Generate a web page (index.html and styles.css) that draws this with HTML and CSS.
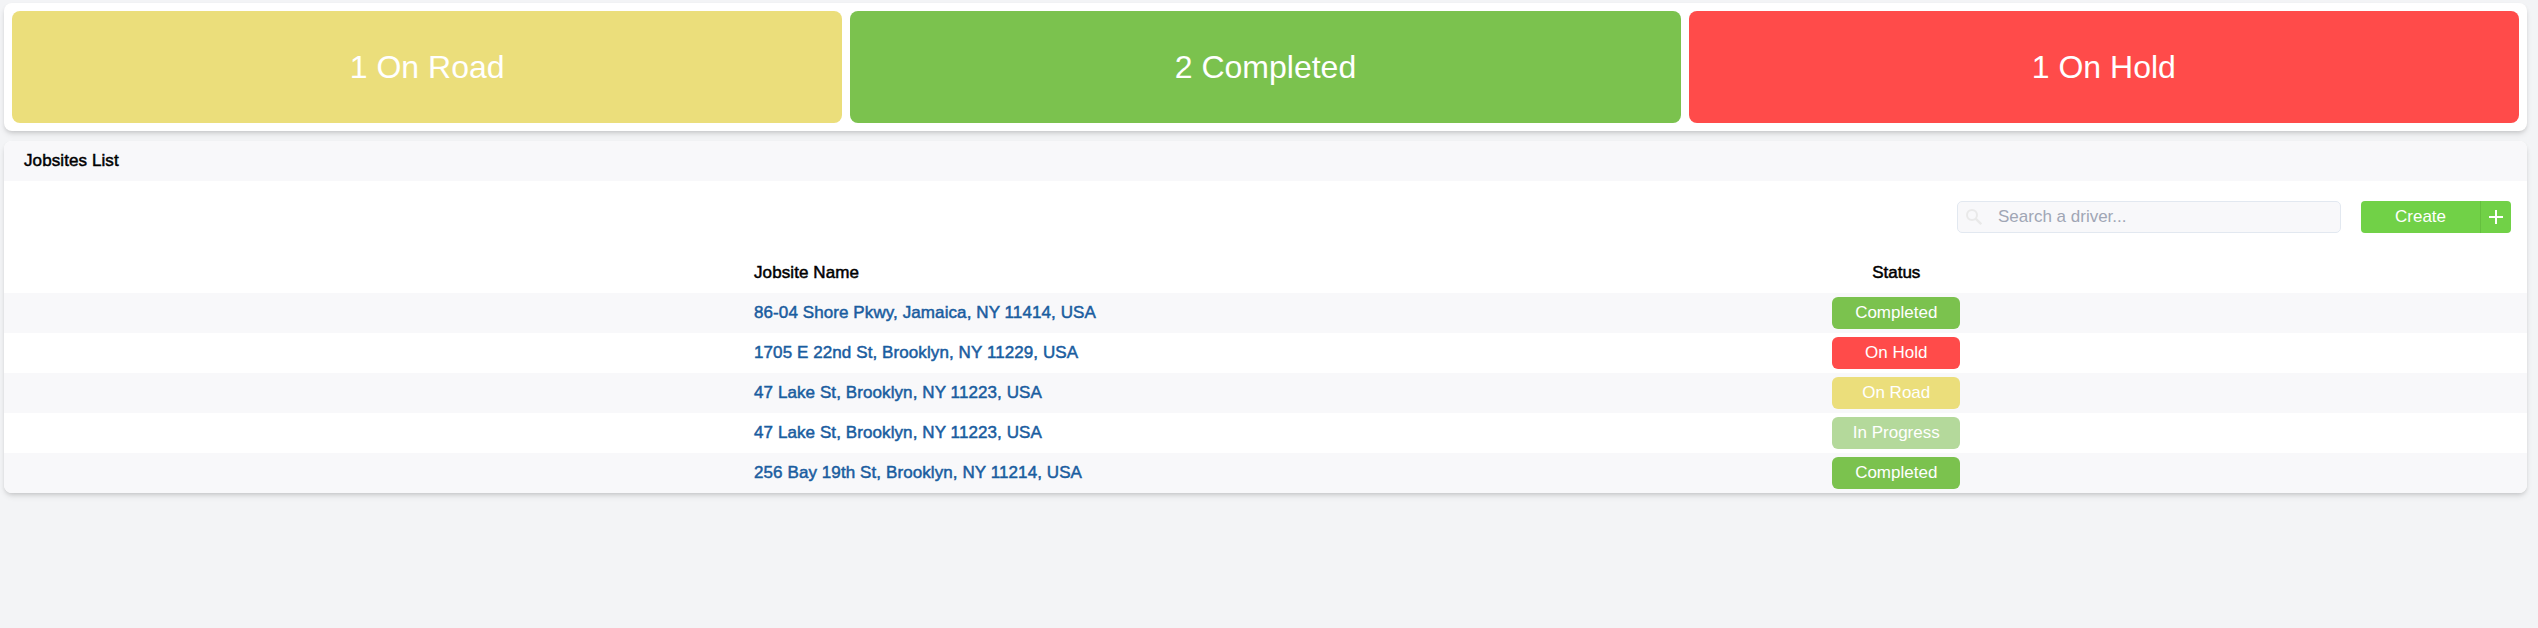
FILE: index.html
```html
<!DOCTYPE html>
<html lang="en">
<head>
<meta charset="utf-8">
<title>Jobsites</title>
<link rel="stylesheet" href="styles.css">
</head>
<body>
<main class="page">
  <section class="summary">
    <div class="tile road">1 On Road</div>
    <div class="tile completed">2 Completed</div>
    <div class="tile hold">1 On Hold</div>
  </section>
  <section class="panel">
    <header class="panel-title"><span>Jobsites List</span></header>
    <div class="toolbar">
      <label class="search">
        <svg class="search-icon" viewBox="0 0 16 16" width="16" height="16" fill="none" stroke="currentColor"><circle cx="6" cy="6" r="5" stroke-width="2"/><path d="M9.6 9.6L15.2 15.2" stroke-width="2.3"/></svg>
        <input type="text" placeholder="Search a driver...">
      </label>
      <button class="create">
        <span class="create-label">Create</span>
        <span class="create-plus"><svg viewBox="0 0 14 14" width="14" height="14" stroke="currentColor" stroke-width="2"><path d="M7 0V14M0 7H14"/></svg></span>
      </button>
    </div>
    <div class="row head"><span class="name">Jobsite Name</span><span class="status">Status</span></div>
    <div class="row"><a class="name">86-04 Shore Pkwy, Jamaica, NY 11414, USA</a><span class="status"><span class="badge completed">Completed</span></span></div>
    <div class="row"><a class="name">1705 E 22nd St, Brooklyn, NY 11229, USA</a><span class="status"><span class="badge hold">On Hold</span></span></div>
    <div class="row"><a class="name">47 Lake St, Brooklyn, NY 11223, USA</a><span class="status"><span class="badge road">On Road</span></span></div>
    <div class="row"><a class="name">47 Lake St, Brooklyn, NY 11223, USA</a><span class="status"><span class="badge progress">In Progress</span></span></div>
    <div class="row"><a class="name">256 Bay 19th St, Brooklyn, NY 11214, USA</a><span class="status"><span class="badge completed">Completed</span></span></div>
  </section>
</main>
</body>
</html>
```
FILE: styles.css
```css
* { box-sizing: border-box; }
body {
  margin: 0;
  min-height: 100vh;
  background: #f3f4f6;
  color: #000;
  font: 17px/24px "Liberation Sans", Arial, sans-serif;
}
.page {
  display: flex;
  flex-direction: column;
  gap: 10px;
  padding: 3px 11px 0 4px;
}
.summary, .panel {
  background: #fff;
  border-radius: 8px;
  box-shadow: 0 4px 6px -1px rgba(0, 0, 0, .1), 0 2px 4px -1px rgba(0, 0, 0, .12);
}
.summary {
  display: grid;
  grid-template-columns: repeat(3, 1fr);
  gap: 8px;
  padding: 8px;
}
.tile {
  display: flex;
  align-items: center;
  justify-content: center;
  height: 112px;
  border-radius: 8px;
  color: #fff;
  font-size: 32px;
}
.road { background: #ebde7b; }
.completed { background: #7bc24e; }
.hold { background: #ff4b4a; }
.progress { background: #b4d99b; }
.panel { overflow: hidden; }
.panel-title {
  display: flex;
  align-items: center;
  height: 40px;
  padding-left: 20px;
  background: #f8f8fa;
  letter-spacing: .09px;
  -webkit-text-stroke: .5px;
}
.toolbar {
  display: flex;
  justify-content: flex-end;
  gap: 20px;
  padding: 20px 16px;
}
.search {
  display: flex;
  align-items: center;
  gap: 16px;
  width: 384px;
  height: 32px;
  padding: 0 8px;
  background: #f8f8fa;
  border: 1px solid #e2e8f0;
  border-radius: 5px;
}
.search-icon { color: #e9e9e9; }
.search input {
  flex: 1;
  min-width: 0;
  padding: 0;
  border: 0;
  outline: 0;
  background: transparent;
  font: inherit;
}
.search input::placeholder { color: #a0a6b5; }
.create {
  display: flex;
  width: 150px;
  height: 32px;
  padding: 0;
  border: 0;
  border-radius: 4px;
  background: #71d147;
  color: #fff;
  font: inherit;
  line-height: 32px;
}
.create-label { width: 119px; }
.create-plus {
  display: flex;
  flex: 1;
  align-items: center;
  justify-content: center;
  height: 32px;
  border-left: 1px solid #65c03f;
}
.row {
  display: grid;
  grid-template-columns: 1fr 1fr;
  align-items: center;
  height: 40px;
}
.row:nth-child(even) { background: #f8f8fa; }
.name {
  padding-left: 750px;
  color: #1a5d9f;
  letter-spacing: .09px;
  white-space: nowrap;
  -webkit-text-stroke: .5px;
}
.head .name { color: #000; }
.head .status { -webkit-text-stroke: .5px; }
.status { display: flex; justify-content: center; }
.badge {
  width: 128px;
  height: 32px;
  border-radius: 6px;
  color: #fff;
  text-align: center;
  line-height: 32px;
}
```
